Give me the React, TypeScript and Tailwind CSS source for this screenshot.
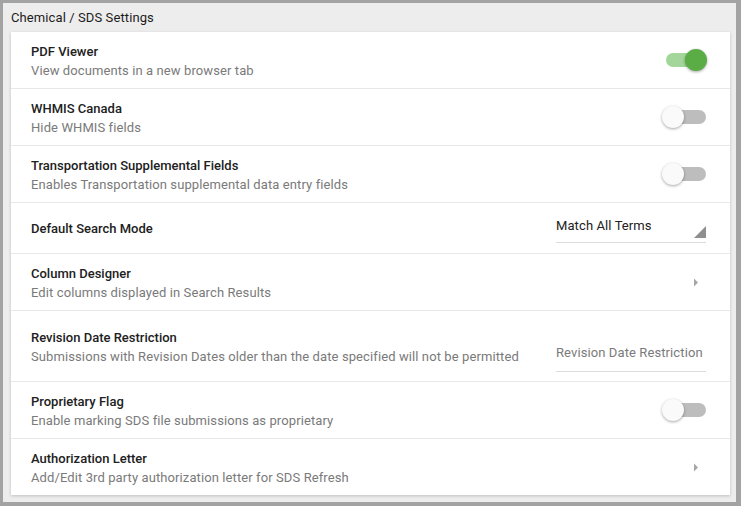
import React from "react";

function Toggle({ on }: { on: boolean }) {
  return (
    <div className="relative w-[46px] h-[24px] shrink-0">
      <div
        className={
          "absolute left-[4px] top-[5px] w-[40px] h-[14px] rounded-full " +
          (on ? "bg-[#a3d69a]" : "bg-[#bdbdbd]")
        }
      />
      <div
        className={
          "absolute top-[1px] w-[22px] h-[22px] rounded-full shadow-[0_1px_3px_rgba(0,0,0,0.35)] " +
          (on ? "left-[23px] bg-[#5aad44]" : "left-0 bg-[#fafafa]")
        }
      />
    </div>
  );
}

function Chevron() {
  return (
    <svg width="6" height="9" viewBox="0 0 6 9" className="mr-[9px]">
      <path d="M1 0.5 L5 4.5 L1 8.5 Z" fill="#a6a6a6" />
    </svg>
  );
}

function Row({
  title,
  sub,
  right,
  h,
  last,
}: {
  title: string;
  sub?: string;
  right: React.ReactNode;
  h: string;
  last?: boolean;
}) {
  return (
    <div
      className={
        "flex items-center justify-between pl-[20px] pr-[22px] " +
        h +
        (last ? "" : " border-b border-[#e8e8e8]")
      }
    >
      <div className="flex flex-col pt-[1px]">
        <div className="text-[13px] leading-[19px] font-medium text-[#212121]">{title}</div>
        {sub && (
          <div className="text-[13px] leading-[19px] text-[#7a7a7a] tracking-[0.1px]">{sub}</div>
        )}
      </div>
      {right}
    </div>
  );
}

export default function App() {
  return (
    <div
      className="w-[741px] h-[506px] bg-[#a3a3a3] pt-[3px] pl-[3px] pr-[5px] pb-[4px]"
      style={{ fontFamily: "Roboto, 'Liberation Sans', sans-serif" }}
    >
      <div className="w-full h-full bg-[#eeeded] pl-[8px] pr-[6px] pb-[7px] flex flex-col">
        <div className="h-[29px] flex items-center text-[13px] text-[#1c1c1c] tracking-[0.1px]">
          Chemical / SDS Settings
        </div>
        <div className="bg-white shadow-[0_1px_3px_rgba(0,0,0,0.2)] flex flex-col">
          <Row
            h="h-[57px]"
            title="PDF Viewer"
            sub="View documents in a new browser tab"
            right={<Toggle on />}
          />
          <Row
            h="h-[57px]"
            title="WHMIS Canada"
            sub="Hide WHMIS fields"
            right={<Toggle on={false} />}
          />
          <Row
            h="h-[57px]"
            title="Transportation Supplemental Fields"
            sub="Enables Transportation supplemental data entry fields"
            right={<Toggle on={false} />}
          />
          <Row
            h="h-[51px]"
            title="Default Search Mode"
            right={
              <div className="relative w-[150px] h-[28px] mt-[2px] mr-[2px] border-b border-[#dcdcdc]">
                <span className="block mt-[1px] text-[13px] leading-[19px] text-[#212121] tracking-[0.1px]">
                  Match All Terms
                </span>
                <svg
                  width="12"
                  height="12"
                  viewBox="0 0 12 12"
                  className="absolute right-0 bottom-[4px]"
                >
                  <path d="M12 0 L12 12 L0 12 Z" fill="#8f8f8f" />
                </svg>
              </div>
            }
          />
          <Row
            h="h-[57px]"
            title="Column Designer"
            sub="Edit columns displayed in Search Results"
            right={<Chevron />}
          />
          <Row
            h="h-[71px]"
            title="Revision Date Restriction"
            sub="Submissions with Revision Dates older than the date specified will not be permitted"
            right={
              <div className="w-[150px] h-[38px] mt-[13px] mr-[2px] border-b border-[#dcdcdc] flex items-start pt-[9px]">
                <span className="text-[13px] leading-[19px] text-[#7a7a7a] tracking-[0.1px]">
                  Revision Date Restriction
                </span>
              </div>
            }
          />
          <Row
            h="h-[57px]"
            title="Proprietary Flag"
            sub="Enable marking SDS file submissions as proprietary"
            right={<Toggle on={false} />}
          />
          <Row
            h="h-[56px]"
            last
            title="Authorization Letter"
            sub="Add/Edit 3rd party authorization letter for SDS Refresh"
            right={<Chevron />}
          />
        </div>
      </div>
    </div>
  );
}
